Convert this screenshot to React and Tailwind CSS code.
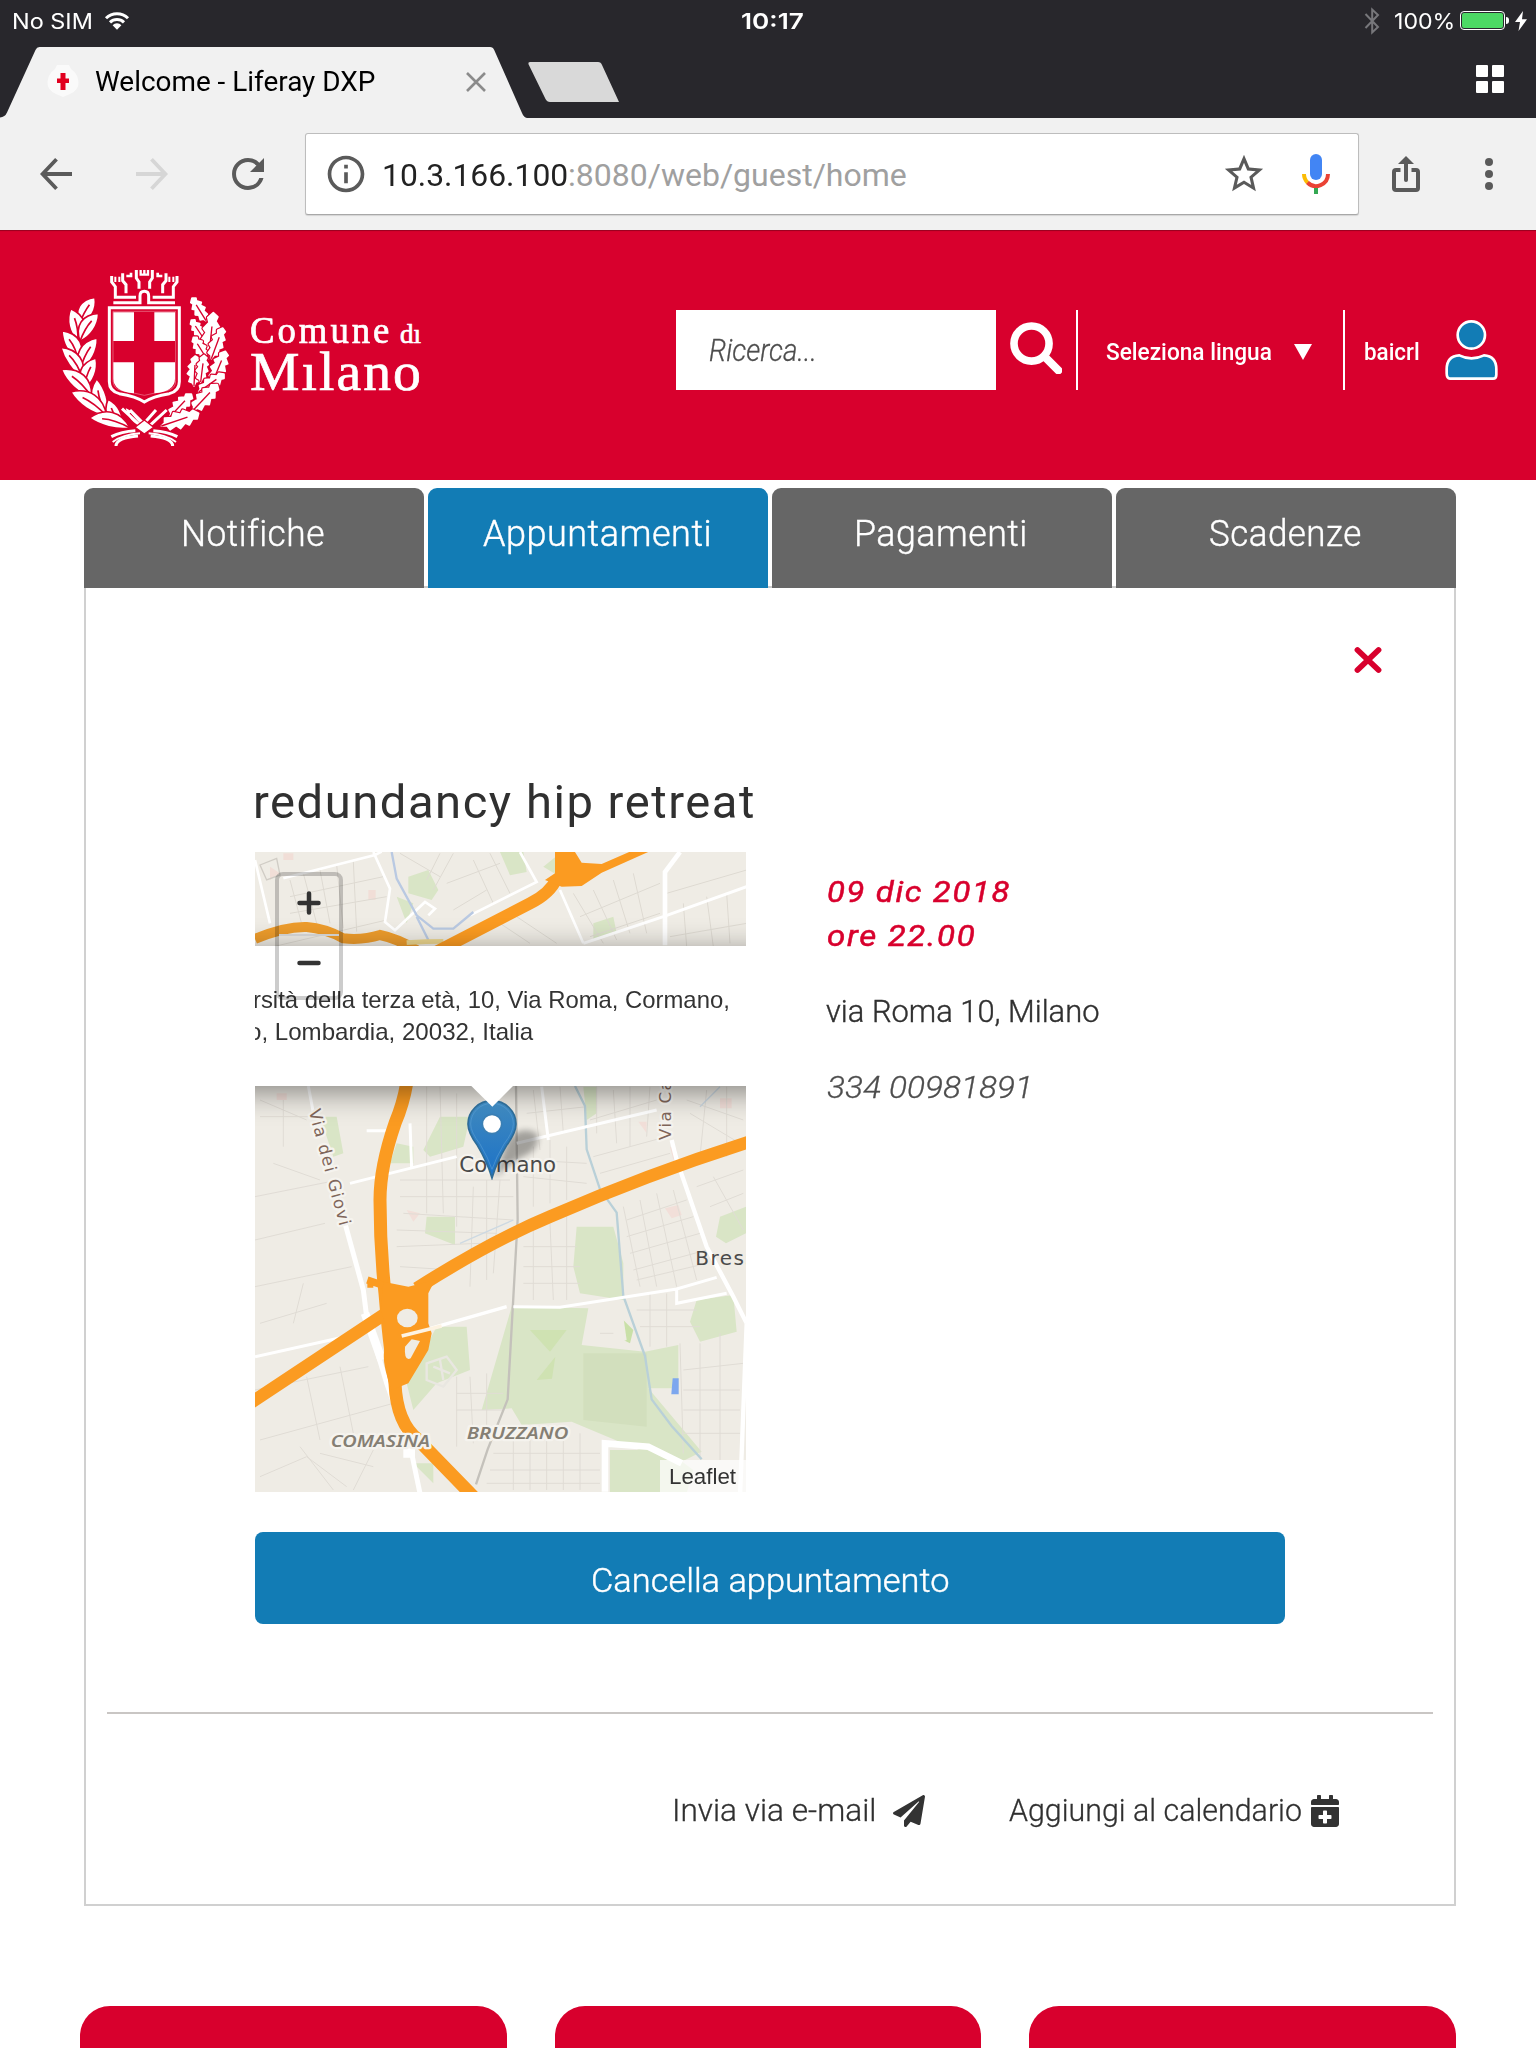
import { useLayoutEffect, useRef, useState } from "react";
import { MdRefresh, MdInfoOutline, MdStarBorder } from "react-icons/md";
import { FaPaperPlane, FaCalendarPlus } from "react-icons/fa";

/* One line of text, condensed or widened to occupy exactly `w` pixels. */
function Fit({ w, className = "", children }) {
  const ref = useRef(null);
  const [scale, setScale] = useState(1);
  useLayoutEffect(() => {
    setScale(w / ref.current.offsetWidth);
  }, [w]);
  return (
    <span className={"flex shrink-0 whitespace-nowrap " + className} style={{ width: w }}>
      <span ref={ref} className="block shrink-0 origin-left" style={{ transform: `scaleX(${scale})` }}>
        {children}
      </span>
    </span>
  );
}

function StatusBar() {
  return (
    <div className="grid h-[40px] grid-cols-3 items-center pl-[12px] pr-[9px] font-['Inter'] text-[22px] leading-none text-white">
      <div className="flex items-center pt-px">
        <Fit w={81}>No SIM</Fit>
        <svg className="ml-[11px] h-[19px] w-[26px]" viewBox="0 0 26 19">
          <path d="M2 7.2a15.6 15.6 0 0 1 22 0M6 11.4a10 10 0 0 1 14 0" fill="none" stroke="#fff" strokeWidth="3" />
          <path d="M8.6 14.2a6.2 6.2 0 0 1 8.8 0L13 18.8z" fill="#fff" />
        </svg>
      </div>
      <div className="flex justify-center pl-[5px] pt-px font-semibold">
        <Fit w={63}>10:17</Fit>
      </div>
      <div className="flex items-center justify-end pt-px">
        <svg className="mr-[14px] h-[28px] w-[16px]" viewBox="0 0 16 28">
          <path d="M1.5 7 14 20 8.200 25.500V2.500L14 8 1.500 21" fill="none" stroke="#77777b" strokeWidth="2" />
        </svg>
        <Fit w={61}>100%</Fit>
        <div className="ml-[5px] h-[19px] w-[45px] rounded-[4px] border border-white p-px">
          <div className="h-full rounded-[2px] bg-[#4cd964]" />
        </div>
        <div className="ml-px h-[7px] w-[3px] rounded-r-full bg-white" />
        <svg className="ml-[6px] h-[20px] w-[12px]" viewBox="0 0 12 20">
          <path d="M8 0 0 11h5L3.500 20 12 8.300H7z" fill="#fff" />
        </svg>
      </div>
    </div>
  );
}

function TabStrip() {
  return (
    <div className="flex h-[78px] items-start pr-[32px]">
      <div className="relative mt-[7px] flex h-[71px] w-[532px] items-center">
        <svg className="absolute inset-0 h-[71px] w-[532px]" viewBox="0 0 532 71">
          <path d="M0 71v-.6q5-.4 7-5L35.500 3q1.300-3 4-3H490q3 0 4.200 3L522 66q1.800 4.500 5 5z" fill="#f1f1f1" />
        </svg>
        <svg className="relative -mt-[3px] ml-[46px] h-[34px] w-[34px]" viewBox="0 0 34 34">
          <path d="M11 1h12l2 4q7 5 7.500 13T24 30l-7 3-7-3Q1 26 1.500 18T9 5z" fill="#fafafa" />
          <path d="M14.500 9h5v5.500H23v4.500h-3.500v7h-5v-7H11v-4.500h3.500z" fill="#e1001f" />
        </svg>
        <Fit w={280} className="relative -mt-[2px] ml-[15px] font-['Roboto'] text-[28px] leading-none text-black">
          Welcome - Liferay DXP
        </Fit>
        <svg className="relative -mt-[2px] ml-[91px] h-[20px] w-[20px]" viewBox="0 0 20 20">
          <path d="m1 1 18 18M19 1 1 19" stroke="#8b8b8b" strokeWidth="2.600" />
        </svg>
      </div>
      <svg className="-ml-[4px] mt-[22px] h-[40px] w-[91px]" viewBox="0 0 91 40">
        <path d="M2 0h68q3 0 4 3l17 37H22q-3 0-4.500-3L.4 2Q0 0 2 0z" fill="#d9d9d9" />
      </svg>
      <div className="ml-auto mt-[25px] grid grid-cols-2 gap-[4px]">
        <div className="size-[12px] rounded-[1px] bg-white" />
        <div className="size-[12px] rounded-[1px] bg-white" />
        <div className="size-[12px] rounded-[1px] bg-white" />
        <div className="size-[12px] rounded-[1px] bg-white" />
      </div>
    </div>
  );
}

function Toolbar() {
  return (
    <div className="flex h-[112px] items-center bg-[#f1f1f1] pl-[40px] text-[#5a5a5a]">
      <svg className="size-[32px]" viewBox="0 0 32 32" fill="none" stroke="#5a5a5a" strokeWidth="3.800">
        <path d="M32 16H3M16.500 1.300 2.600 16l13.900 14.700" />
      </svg>
      <svg className="ml-[64px] size-[32px]" viewBox="0 0 32 32" fill="none" stroke="#d6d6d6" strokeWidth="3.800">
        <path d="M0 16h29M15.500 1.300 29.400 16 15.500 30.700" />
      </svg>
      <MdRefresh className="ml-[56px] size-[48px]" />
      <div className="ml-[33px] flex h-[82px] w-[1054px] items-center rounded-[3px] border border-[#bdbdbd] border-b-[#a8a8a8] bg-white shadow-[0_1px_1px_rgba(0,0,0,0.12)]">
        <MdInfoOutline className="ml-[18px] size-[44px]" />
        <Fit w={186} className="ml-[14px] mt-[2px] font-['Roboto'] text-[32px] leading-none text-[#222]">
          10.3.166.100
        </Fit>
        <Fit w={339} className="mt-[2px] font-['Roboto'] text-[32px] leading-none text-[#a0a0a0]">
          :8080/web/guest/home
        </Fit>
        <MdStarBorder className="ml-auto size-[46px]" />
        <svg className="ml-[35px] mr-[28px] h-[40px] w-[28px]" viewBox="0 0 28 40">
          <rect x="8" y="0" width="12" height="26" rx="6" fill="#4285f4" />
          <path d="M2 20a12 12 0 0 0 3.700 8.700" fill="none" stroke="#fbbc05" strokeWidth="4" />
          <path d="M5.500 28.500A12 12 0 0 0 26 20" fill="none" stroke="#ea4335" strokeWidth="4" />
          <path d="M12 34h4v6h-4z" fill="#34a853" />
        </svg>
      </div>
      <svg className="ml-[33px] h-[36px] w-[28px]" viewBox="0 0 28 36" fill="none" stroke="#5a5a5a" strokeWidth="4">
        <path d="M8.500 14H4q-2 0-2 2v16q0 2 2 2h20q2 0 2-2V16q0-2-2-2h-4.500" />
        <path d="M14 5v19" strokeLinecap="round" />
        <path d="M14 0 22 8H6z" fill="#5a5a5a" stroke="none" />
      </svg>
      <div className="ml-[65px] flex flex-col gap-[4px]">
        <div className="size-[8px] rounded-full bg-[#5a5a5a]" />
        <div className="size-[8px] rounded-full bg-[#5a5a5a]" />
        <div className="size-[8px] rounded-full bg-[#5a5a5a]" />
      </div>
    </div>
  );
}

/* tip x, tip y, base x, base y, width, bend */
const LAUREL = [
  [117, 112, 70, 192, 42, 6],
  [44, 146, 66, 244, 44, -10],
  [128, 160, 72, 244, 42, 10],
  [18, 212, 68, 308, 42, -14],
  [124, 234, 72, 330, 42, 10],
  [14, 262, 80, 356, 38, -14],
  [120, 294, 84, 388, 42, 10],
  [16, 328, 108, 412, 44, -12],
  [122, 356, 154, 468, 42, 12],
  [44, 396, 152, 468, 44, -12],
  [156, 418, 198, 500, 38, 6],
  [100, 474, 222, 504, 42, -14],
  [206, 440, 262, 504, 22, 2],
];
const OAK = [
  [408, 114, 450, 182, 34],
  [406, 180, 446, 240, 30],
  [472, 158, 458, 296, 50],
  [412, 232, 452, 296, 32],
  [500, 204, 466, 296, 38],
  [418, 288, 414, 378, 40],
  [508, 274, 470, 366, 42],
  [444, 286, 434, 366, 32],
  [504, 342, 428, 396, 36],
  [484, 374, 410, 452, 44],
  [406, 402, 342, 470, 40],
  [428, 460, 316, 498, 48],
];

function leafPath([tx, ty, bx, by, w, bend]) {
  const dx = bx - tx;
  const dy = by - ty;
  const len = Math.hypot(dx, dy);
  const nx = -dy / len;
  const ny = dx / len;
  const at = (t, s) => `${(tx + dx * t + nx * s).toFixed(1)} ${(ty + dy * t + ny * s).toFixed(1)}`;
  return `M${at(0, 0)}C${at(0.3, w * 0.7 + bend)} ${at(0.7, w * 0.7 + bend)} ${at(1, 0)}C${at(0.7, -w * 0.7 + bend)} ${at(0.3, -w * 0.7 + bend)} ${at(0, 0)}Z`;
}

function veinPath([tx, ty, bx, by, , bend]) {
  const dx = bx - tx;
  const dy = by - ty;
  const len = Math.hypot(dx, dy);
  const cx = tx + dx * 0.6 - (dy / len) * bend;
  const cy = ty + dy * 0.6 + (dx / len) * bend;
  return `M${tx + dx * 0.3 - (dy / len) * bend * 0.5} ${ty + dy * 0.3 + (dx / len) * bend * 0.5}Q${cx} ${cy} ${bx} ${by}`;
}

function oakPath([tx, ty, bx, by, w]) {
  const dx = bx - tx;
  const dy = by - ty;
  const len = Math.hypot(dx, dy);
  const at = (t, s) => `${(tx + dx * t - (dy / len) * s * w).toFixed(1)} ${(ty + dy * t + (dx / len) * s * w).toFixed(1)}`;
  const side = [[0.12, 0.3], [0.22, 0.2], [0.36, 0.5], [0.44, 0.3], [0.6, 0.54], [0.68, 0.28], [0.86, 0.4], [0.9, 0.12]];
  const right = side.map(([t, s]) => "L" + at(t, s)).join("");
  const left = [...side].reverse().map(([t, s]) => "L" + at(t - 0.04, -s)).join("");
  return `M${at(0, 0)}${right}L${at(1, 0)}${left}Z`;
}

function Crest() {
  return (
    <svg className="h-[195px] w-[180px]" viewBox="0 0 540 585">
      {LAUREL.map((leaf, i) => (
        <g key={i}>
          <path d={leafPath(leaf)} fill="#fff" stroke="#d8002d" strokeWidth="5" strokeLinejoin="round" />
          <path d={veinPath(leaf)} fill="none" stroke="#d8002d" strokeWidth="5" />
        </g>
      ))}
      {OAK.map((leaf, i) => (
        <g key={i}>
          <path d={oakPath(leaf)} fill="#fff" stroke="#d8002d" strokeWidth="12" strokeLinejoin="round" />
          <path d={oakPath(leaf)} fill="#fff" stroke="#fff" strokeWidth="5" strokeLinejoin="round" />
          <path d={veinPath([...leaf, 0])} fill="none" stroke="#d8002d" strokeWidth="4" />
        </g>
      ))}
      {/* mural crown */}
      <g fill="none" stroke="#fff" strokeWidth="9">
        <path d="M172 128h80v-20q0-14 13-14t13 14v20h79" />
        <path d="M167 48v18l11 14v32h62M363 48v18l-11 14v32h-62" />
        <path d="M178 66V50M190 66V50M352 66V50M340 66V50" strokeWidth="6" />
        <path d="M200 40v22l10 12v26M330 40v22l-10 12v26" />
        <path d="M211 48h14V38M319 48h-14V38" strokeWidth="8" />
        <path d="M241 30v24l8 12v20M289 30v24l-8 12v20" />
        <path d="M254 30v14h22V30M265 30v14" strokeWidth="7" />
      </g>
      {/* shield */}
      <path
        d="M160 143h210v222q0 28-30 36-50 8-75 25-25-17-75-25-30-8-30-36z"
        fill="#d8002d"
        stroke="#fff"
        strokeWidth="9"
      />
      <path
        d="M171 154h188v208q0 24-26 30-42 8-68 14-26-6-68-14-26-6-26-30z"
        fill="none"
        stroke="#ee8296"
        strokeWidth="2"
      />
      <path d="M172 157h62v86h-62zM295 157h62v86h-62zM172 307h62v93q-62-6-62-44zM295 307h62v49q0 38-62 44z" fill="#fff" />
      {/* ribbon */}
      <g fill="none" stroke="#fff" strokeWidth="9">
        <path d="m198 446 50 46M222 450l36 36M332 450l-50 46M300 450l-32 36" />
        <path d="M166 530q30-16 72-18M180 558q0-24 66-30M364 530q-30-16-72-18M350 558q0-24-66-30" />
        <path d="M170 546q30-22 82-26M360 546q-30-22-82-26" strokeWidth="6" />
      </g>
      <path d="m265 480 28 22-28 20-28-20z" fill="#fff" stroke="#d8002d" strokeWidth="4" />
    </svg>
  );
}

function SiteHeader() {
  return (
    <header className="flex h-[250px] items-start bg-[#d8002d] pl-[56px] font-['Roboto'] text-white shadow-[inset_0_2px_1px_-1px_rgba(0,0,0,0.3)]">
      <div className="mt-[30px]">
        <Crest />
      </div>
      <div className="ml-[14px] mt-[79px] w-[174px] font-['Liberation_Serif'] [-webkit-text-stroke:0.7px_white]">
        <div className="flex items-baseline gap-[8px] leading-[44px]">
          <Fit w={142} className="text-[37px] tracking-[3px]">Comune</Fit>
          <Fit w={21} className="text-[27px]">dı</Fit>
        </div>
        <Fit w={173} className="-mt-[8px] text-[55px] leading-[48px] tracking-[2px]">Mılano</Fit>
      </div>
      <div className="ml-auto mt-[80px] flex h-[80px] items-center pr-[38px]">
        <div className="flex h-full w-[320px] items-center bg-white pl-[33px] pt-[3px]">
          <Fit w={108} className="text-[31px] font-light italic text-[#4d4d4d] [-webkit-text-stroke:0.3px_#4d4d4d]">Ricerca...</Fit>
        </div>
        <svg className="ml-[14px] mb-[4px] size-[52px]" viewBox="0 0 157 157" fill="none" stroke="#fff">
          <circle cx="65" cy="65" r="53" strokeWidth="23" />
          <path d="m106 106 40 40" strokeWidth="24" strokeLinecap="round" />
        </svg>
        <div className="ml-[14px] h-full w-[2px] bg-white" />
        <Fit w={166} className="ml-[28px] mt-[3px] text-[24px] font-medium leading-none">Seleziona lingua</Fit>
        <svg className="ml-[22px] mt-[3px] h-[16px] w-[18px]" viewBox="0 0 18 16">
          <path d="M0 0h18L9 16z" fill="#fff" />
        </svg>
        <div className="ml-[31px] h-full w-[2px] bg-white" />
        <Fit w={56} className="ml-[19px] mt-[3px] text-[24px] font-medium leading-none">baicrl</Fit>
        <svg className="ml-[25px] h-[60px] w-[53px]" viewBox="0 0 159 180" fill="#127cb5" stroke="#fff" strokeWidth="8">
          <circle cx="79" cy="45" r="41" />
          <path d="M5 160v-12q0-40 38-42 36 18 74 0 37 2 37 42v16q0 12-10 12H15q-10 0-10-16z" />
        </svg>
      </div>
    </header>
  );
}

function MapDrawing() {
  return (
    <svg className="absolute inset-0 h-[640px] w-[491px]" viewBox="0 0 491 640">
      <rect width="491" height="640" fill="#efece5" />
      {/* northern strip */}
      <g transform="translate(-15 -102) scale(.33333)" fill="none">
        <path d="M505 380l60-20 30 60-20 30-70-20zM780 306h70l10 60-50 10zM1060 520l60-20 10 50-70 20zM470 440l50 20-20 60zM910 350l50-40v70z" fill="#d9e5c6" />
        <path d="M130 310h30v20h-30zM90 350l30 20-30 20zM385 420h22v30h-22z" fill="#f1ded7" />
        <g stroke="#dedad2" strokeWidth="3">
          <path d="M150 390l40 150M190 370l40 150M240 360l30 160M290 345l20 190M340 335l10 210M150 440l280-60M150 490l290-50M480 310l120 70M600 310l-40 80M640 310l-60 110M700 330l60 130M750 310l60 120M620 400l160-60M640 480l100-60M1000 430l90 150M1060 420l70 150M1120 390l50 160M1180 370l40 180M1020 500l240-100M1050 560l210-70M1330 460l10 130M1400 440l20 150M1460 430l10 150M1280 430l240-70M1290 560l230-40M800 480l150 100M780 520l90 60M100 590l340-80" />
        </g>
        <g stroke="#fff" strokeWidth="10">
          <path d="M45 330l45 190M130 385l275-70 20-10M400 306l50 110-15 100 30 25 90-85 30 20-20 20M840 306l50 90-200 100M960 420l70 160" strokeWidth="8" />
          <path d="M1320 306l-45 60v220" strokeWidth="14" />
          <path d="M1030 580l240-80 250-90" strokeWidth="9" />
        </g>
        <path d="M60 345l50-20 10 50-40 15z" stroke="#d0ccc5" strokeWidth="4" />
        <path d="M455 306l15 80 60 110 50 40h60l60-50M530 500l35 70" stroke="#b9c9e2" strokeWidth="7" />
        <path d="M45 567q90-38 155-36 55 4 110 34 60 6 110-10 50 10 110 45" stroke="#ed9c2c" strokeWidth="30" />
        <path d="M500 578q60-4 110-4" stroke="#ecd68e" strokeWidth="14" />
        <path d="M580 610l290-150q60-30 80-74" stroke="#fb9b21" strokeWidth="36" />
        <path d="M945 290v80l-30 20 50 20 60-2 60-40 180-80-70 6-110 48-60-4-30-48z" fill="#fb9b21" />
      </g>
      {/* main area */}
      <g transform="translate(-15 228) scale(.33333)" fill="none">
        <g fill="#d9e5c6">
          <path d="M240 110h50l20 110-30 10zM600 110h90l-20 90-100 30-20-20zM560 410h85v85l-90-35zM1010 440h110l30 110v110l-130-20-20-80zM815 680l230 5-20 110 190 20 100-20v130h-90l160 190-80 40-310-130-150 10-30-50-90 5zM590 740h90l10 130-100 40-70 80-20-80zM1370 660l110-15 10 110-110 30-30-60zM1440 410l78-30v80l-60 30-30-20zM1110 1110h170l80 60-20 70h-230zM520 1150h60v60z" />
          <path d="M1030 20h40v80l-30 20zM470 190l50 10v50h-70z" />
        </g>
        <path d="M1030 820h190v220l-190-20z" fill="#d2dfbd" />
        <path d="M1150 720l30 30-10 40-40-20z" fill="#c9e0a8" />
        <path d="M870 750h110l-50 65zM890 900l56-70-10 66z" fill="#cfe2b2" />
        <path d="M1030 790l50-100 70 20 10 70-60 20z" fill="#efece5" />
        <path d="M1298 895h18v48h-22z" fill="#7da7ee" />
        <g fill="#f2dfd9">
          <path d="M500 390l40 10-20 25zM1275 385l40-10 10 30-30 10zM1290 200l20 10-10 30zM110 40h30v20h-30zM1440 55h35v30h-35zM745 215l30 15-25 25zM1195 125h25v35z" />
        </g>
        <g stroke="#e0dcd5" strokeWidth="3">
          <path d="M60 110h150M60 60l140 60M45 350l250-50M45 480l210-50M45 620l290-60M60 730l200-60M100 250l140 50M130 60v140M190 610l-30 120M45 930l340-70M200 890l40 190M300 860l40 200M60 1080l400-110M180 1100l100 130M60 1190l140-60 120 90M400 1110l-60 120M240 1120l160 40" />
          <path d="M560 20v380M600 20l10 380M650 40v400M700 320l-10 300M740 300v300M780 300l-20 280M880 200v180M930 180v190M980 200v160M860 240l180 10M850 290l190 20M480 300h330M480 350h340M490 400l330 20M470 450l300 10M470 500l250-10M480 560l160 10M880 30l20 180M960 20l10 140M860 100l180-20M1070 20v140M1120 30l10 160M1170 20v180M1230 20l-10 150M1050 120l200-60M1060 230l220-60M1080 280l210-60M1340 60l170 60M1350 100l150 90M1400 30l-20 200M1460 20v210" />
          <path d="M880 440v220M930 430l10 230M980 400v260M850 500h160M850 560h170M850 610h170M1150 380l50 240M1200 360l50 260M1250 340l60 280M1300 330l70 270M1160 420l180-60M1160 470l200-60M1170 520l210-60M1180 570l220-60M1190 600l210-50M1420 290l90 160M1370 320l140-50M1410 380l100-40M650 890v210M690 890l10 200M740 880v180M650 940h140M650 990h140M820 1080v150M870 1080v150M920 1060v170M970 1060v170M1020 1060v170M760 1120h320M750 1170h330M740 1210h340M1230 640v160M1280 640v160M1190 690h180M1200 740h180M1320 790l10 330M1380 790v340M1440 760v380M1330 870l180-20M1330 930h170M1330 990h170M1330 1060h170M1080 760h40" />
        </g>
        <g stroke="#e9e7e1" strokeWidth="7">
          <path d="M560 850l60-20 30 40-40 50-50-20zM580 860l50 20M600 840l10 60" />
        </g>
        {/* railway and streams */}
        <path d="M828 18l5 400-15 270-15 270-60 150-35 105" stroke="#c4c1bb" strokeWidth="7" />
        <path d="M1005 18l30 60 5 130 40 120 50 70 20 250 65 180 20 130 60 80 90 100" stroke="#b9d0d8" strokeWidth="7" />
        <path d="M820 420l-160 70M1440 20l-60 60" stroke="#cdd9e2" strokeWidth="4" />
        {/* secondary streets */}
        <g stroke="#fff" strokeWidth="9">
          <path d="M205 18l15 80M380 152h60M510 130l5 135M330 310l320-80M830 190l420-100M45 830l270-60M905 20l20 160M820 680l140 2 350-55 120-35M1310 625v45l150-30" />
          <path d="M800 680l-315 90" strokeWidth="10" />
        </g>
        <g stroke="#fff" strokeWidth="20">
          <path d="M315 430l55 200 10 80 60 200 75 210 25 120" strokeWidth="15" />
          <path d="M375 700l50 140M490 1120h35" strokeWidth="26" />
          <path d="M1295 180l15 60 90 260 80 150 40 80-10 260-10 260" strokeWidth="13" />
          <path d="M1095 1235v-145l130 10 100 50" />
        </g>
        {/* motorways */}
        <g stroke="#fb9b21" strokeWidth="38">
          <path d="M500 10q-10 60-35 120-45 130-45 230 0 140 15 280 10 130 30 270 5 120 70 170l170 175" strokeWidth="39" />
          <path d="M30 970l400-265M530 625q220-140 400-215 300-130 600-225" />
          <path d="M400 612h-18M382 600l60 20" strokeWidth="22" />
        </g>
        <path
          d="M430 605l75 15 80-20-20 40v90l10 30-10 50-60 100-50 20q-30-80-22-120l15-30-25-90z"
          fill="#fb9b21"
        />
        <ellipse cx="502" cy="714" rx="31" ry="28" fill="#efece5" />
        <path d="M495 800l20-22 25 5-28 52q-20 10-17-35z" fill="#efece5" />
        <path d="M485 768l120-30" stroke="#fdf3e2" strokeWidth="11" />
        {/* labels */}
        <g stroke="#f5f3ee" strokeWidth="14" strokeLinejoin="round" paintOrder="stroke">
          <g className="font-['DejaVu_Sans']" fill="#4a4a4a">
            <text x="658" y="275" fontSize="62" textLength="290" lengthAdjust="spacingAndGlyphs">Cormano</text>
            <text x="1366" y="556" fontSize="60" textLength="222" stroke="none">Bresso</text>
          </g>
          <g className="font-['Noto_Sans'] font-semibold italic" fill="#857f74">
            <text x="272" y="1102" fontSize="50" textLength="298" lengthAdjust="spacingAndGlyphs">COMASINA</text>
            <text x="680" y="1078" fontSize="50" textLength="305" lengthAdjust="spacingAndGlyphs">BRUZZANO</text>
          </g>
          <g className="font-['DejaVu_Sans']" fill="#80665a" fontSize="50">
            <text transform="translate(206 92) rotate(75)" textLength="360">Via dei Giovi</text>
            <text transform="translate(1293 180) rotate(-90)" textLength="250">Via Cado</text>
          </g>
        </g>
      </g>
    </svg>
  );
}

function Marker() {
  return (
    <svg className="absolute left-[197px] top-[234px] h-[94px] w-[110px]" viewBox="636 18 330 282">
      <defs>
        <linearGradient id="pin" x1="0" y1="0" x2="0" y2="1">
          <stop offset="0" stopColor="#4089bd" />
          <stop offset="1" stopColor="#1c72c8" />
        </linearGradient>
        <filter id="soft" x="-20%" y="-20%" width="140%" height="140%">
          <feGaussianBlur stdDeviation="9" />
        </filter>
      </defs>
      <path d="M762 292l40-110q40-50 90-20 10 50-50 70z" fill="#000" opacity=".32" filter="url(#soft)" />
      <path
        d="M756 294q-14-48-44-98-28-38-28-64a72 70 0 0 1 144 0q0 26-28 64-30 50-44 98z"
        fill="url(#pin)"
        stroke="#2e6c97"
        strokeWidth="5"
      />
      <path d="M756 268q-12-36-36-76-28-36-28-60a64 62 0 0 1 128 0q0 24-28 60-24 40-36 76z" fill="none" stroke="#5a9fd2" strokeWidth="3" opacity=".6" />
      <circle cx="756" cy="132" r="29" fill="#fff" stroke="#3a7fb4" strokeWidth="5" />
      <path d="M693 17h127l-63 63z" fill="#fff" />
    </svg>
  );
}

function LeafletMap() {
  return (
    <div className="relative h-[640px] w-[491px] overflow-hidden">
      <MapDrawing />
      {/* address popup */}
      <div className="absolute -left-[60px] top-[94px] h-[140px] w-[610px] bg-white pt-[38px] font-['Liberation_Sans'] text-[24px] leading-[32px] text-[#333] shadow-[0_6px_28px_rgba(0,0,0,0.45)]">
        <Fit w={477} className="ml-[58px]">rsità della terza età, 10, Via Roma, Cormano,</Fit>
        <Fit w={285} className="ml-[53px]">o, Lombardia, 20032, Italia</Fit>
      </div>
      <Marker />
      {/* zoom control */}
      <div className="absolute left-[20px] top-[20px] h-[128px] w-[68px] rounded-[8px] border-4 border-black/20">
        <div className="flex h-[60px] items-center justify-center border-b-2 border-[#ccc] pb-[4px]">
          <svg className="size-[24px]" viewBox="0 0 24 24">
            <path d="M12 2.500v19M2.500 12h19" stroke="#333" strokeWidth="4.500" strokeLinecap="round" />
          </svg>
        </div>
        <div className="flex h-[54px] items-center justify-center">
          <svg className="size-[24px]" viewBox="0 0 24 24">
            <path d="M2.500 12h19" stroke="#333" strokeWidth="4.500" strokeLinecap="round" />
          </svg>
        </div>
      </div>
      <div className="absolute bottom-0 right-0 flex h-[32px] w-[86px] items-center bg-white/70 pl-[9px] pt-[2px] font-['Liberation_Sans'] text-[22px] leading-none text-[#333]">
        <Fit w={67}>Leaflet</Fit>
      </div>
    </div>
  );
}

const TABS = [
  { label: "Notifiche", w: 144, active: false },
  { label: "Appuntamenti", w: 229, active: true },
  { label: "Pagamenti", w: 174, active: false },
  { label: "Scadenze", w: 153, active: false },
];

function AppointmentPanel() {
  return (
    <section className="mx-[84px] w-[1372px] pt-[8px]">
      <nav className="grid grid-cols-4 gap-[4px] bg-[linear-gradient(#ccc,#ccc)] bg-[length:100%_2px] bg-bottom bg-no-repeat">
        {TABS.map((t) => (
          <div
            key={t.label}
            className={
              "flex h-[100px] w-[340px] items-center justify-center rounded-t-[9px] pb-[9px] pr-[2px] text-[37px] font-light leading-none text-white [-webkit-text-stroke:0.4px_white] " +
              (t.active ? "bg-[#127cb5]" : "bg-[#666]")
            }
          >
            <Fit w={t.w} className="tracking-[0.5px]">{t.label}</Fit>
          </div>
        ))}
      </nav>
      <div className="h-[1318px] border-x-2 border-b-2 border-[#d0d0d0] px-[21px] text-[#303030]">
        <div className="flex justify-end pr-[50px] pt-[58px]">
          <svg className="h-[28px] w-[30px]" viewBox="0 0 30 28">
            <path d="M4.500 4l21 20M25.500 4l-21 20" stroke="#d8002d" strokeWidth="5.800" strokeLinecap="round" />
          </svg>
        </div>
        <div className="px-[148px] pt-[98px]">
          <h1 className="-ml-[2px] flex h-[60px] items-center text-[46px] leading-none tracking-[1.500px]">
            <Fit w={503}>redundancy hip retreat</Fit>
          </h1>
          <div className="mt-[20px] flex">
            <LeafletMap />
            <div className="pl-[80px] pt-[18px] text-[31px] leading-[44px]">
              <Fit w={184} className="pl-px text-[30px] italic tracking-[1.500px] text-[#d8002d] [-webkit-text-stroke:0.5px_#d8002d]">09 dic 2018</Fit>
              <Fit w={150} className="pl-px text-[30px] italic tracking-[1.500px] text-[#d8002d] [-webkit-text-stroke:0.5px_#d8002d]">ore 22.00</Fit>
              <Fit w={273} className="mt-[32px] font-light [-webkit-text-stroke:0.4px_#303030]">via Roma 10, Milano</Fit>
              <Fit w={206} className="mt-[32px] pl-px font-light italic text-[#4d4d4d] [-webkit-text-stroke:0.3px_#4d4d4d]">334 00981891</Fit>
            </div>
          </div>
          <button className="mt-[40px] flex h-[92px] w-[1030px] items-center justify-center rounded-[8px] bg-[#127cb5] pt-[3px] text-[34px] font-light leading-none text-white [-webkit-text-stroke:0.4px_white]">
            <Fit w={358}>Cancella appuntamento</Fit>
          </button>
        </div>
        <div className="mt-[88px] h-[2px] bg-[#c9c6c4]" />
        <div className="flex items-center pl-[565px] pt-[74px] text-[31px] font-light leading-[44px] [-webkit-text-stroke:0.3px_#303030]">
          <Fit w={204} className="pt-px">Invia via e-mail</Fit>
          <FaPaperPlane className="ml-[17px] size-[32px] text-[#333]" />
          <Fit w={293} className="ml-[84px] pt-px">Aggiungi al calendario</Fit>
          <FaCalendarPlus className="ml-[9px] h-[32px] w-[28px] text-[#333]" />
        </div>
      </div>
    </section>
  );
}

export default function App() {
  return (
    <div className="h-[2048px] w-[1536px] overflow-hidden bg-white font-['Roboto',sans-serif]">
      <div className="bg-[#28272c]">
        <StatusBar />
        <TabStrip />
      </div>
      <Toolbar />
      <SiteHeader />
      <AppointmentPanel />
      <div className="ml-[80px] mt-[100px] grid w-[1376px] grid-cols-3 gap-[48px]">
        <div className="h-[80px] rounded-t-[30px] bg-[#d8002d]" />
        <div className="h-[80px] rounded-t-[30px] bg-[#d8002d]" />
        <div className="h-[80px] rounded-t-[30px] bg-[#d8002d]" />
      </div>
    </div>
  );
}
